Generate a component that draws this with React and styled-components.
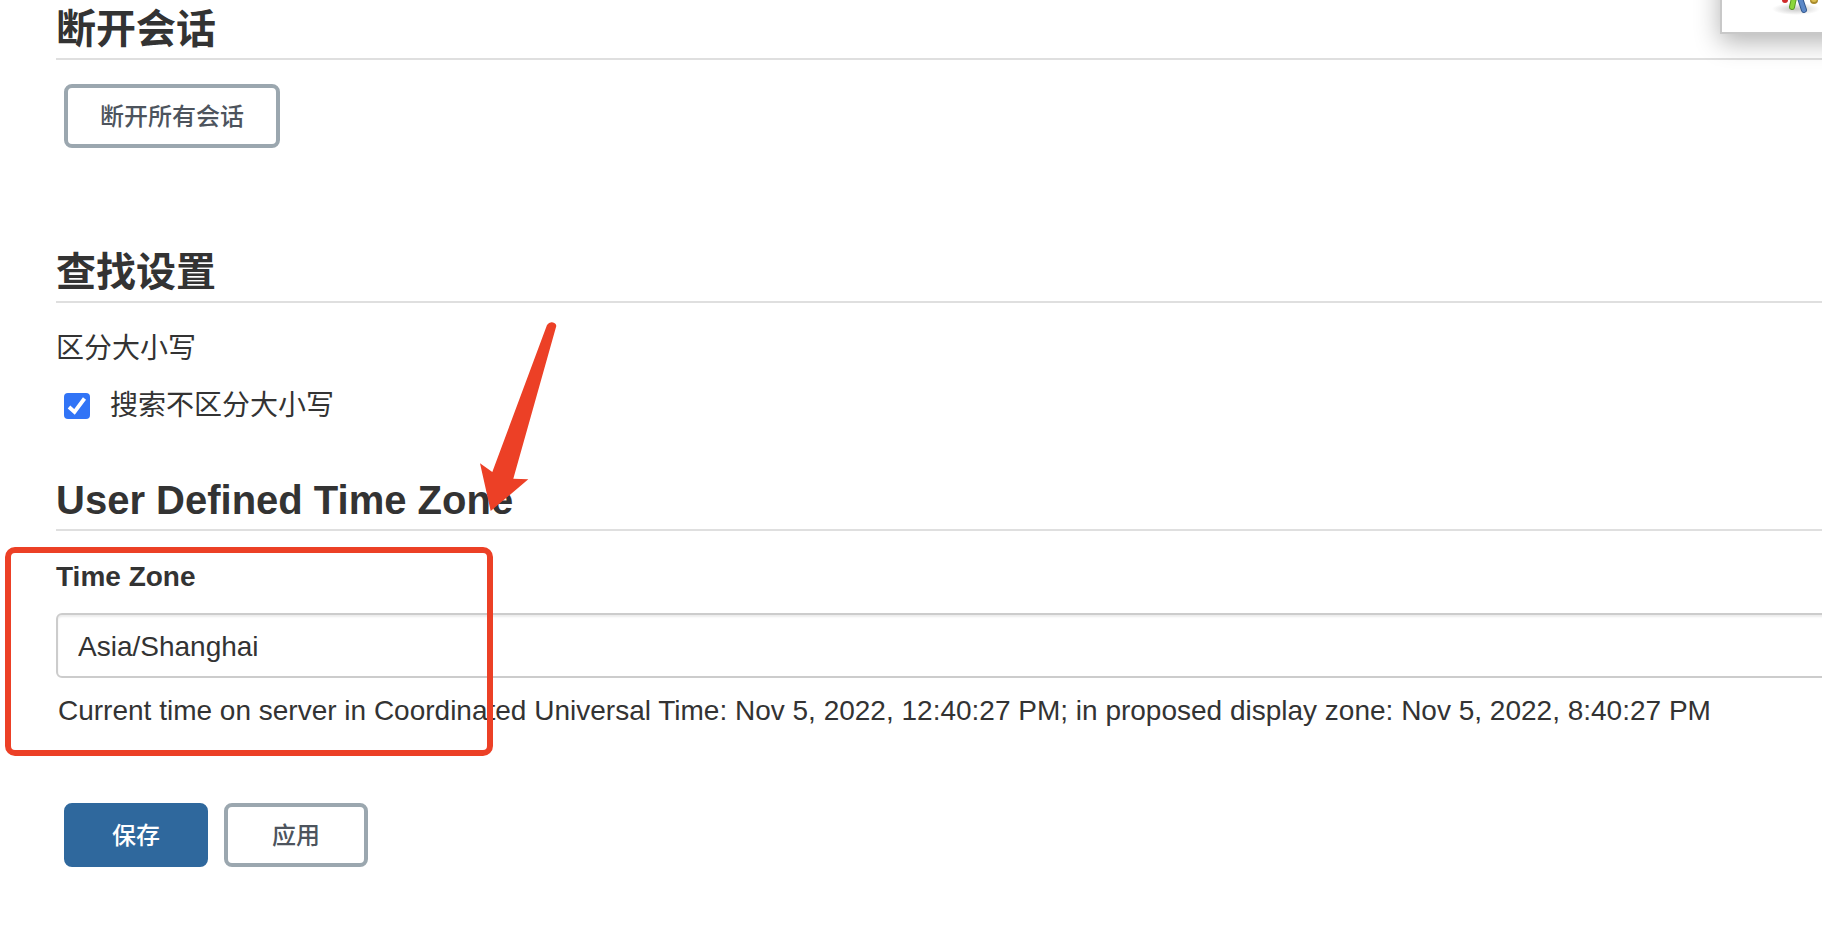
import React, { useState } from 'react';
import styled, { createGlobalStyle } from 'styled-components';

const GlobalStyle = createGlobalStyle`
  * {
    box-sizing: border-box;
  }
  body {
    margin: 0;
    background: #ffffff;
    color: #333333;
    font-family: "Liberation Sans", "Noto Sans CJK SC", sans-serif;
    font-size: 28px;
    line-height: 40px;
  }
`;

const PageStyled = styled.main`
  position: relative;
  padding: 6px 0 60px 56px;
  overflow: hidden;
`;
const SectionStyled = styled.section`
  margin-bottom: ${props => props.$gap}px;
`;
const TitleStyled = styled.h2`
  margin: 0 0 24px;
  padding-bottom: 6px;
  border-bottom: 2px solid #dfdfdf;
  font-size: 40px;
  line-height: 46px;
  font-weight: bold;
`;
const ButtonRowStyled = styled.div`
  display: flex;
  gap: 16px;
  padding-left: 8px;
`;
const ButtonStyled = styled.button`
  min-width: 144px;
  height: 64px;
  padding: 0 32px 4px;
  border: 4px solid ${props => props.$primary ? '#2f689d' : '#9ba7af'};
  border-radius: 8px;
  background: ${props => props.$primary ? '#2f689d' : '#ffffff'};
  color: ${props => props.$primary ? '#ffffff' : '#4d545d'};
  font-family: inherit;
  font-size: 24px;
  font-weight: 500;
  cursor: pointer;
`;
const CaptionStyled = styled.div`
  padding-top: 2px;
  margin-bottom: 17px;
`;
const CheckLabelStyled = styled.label`
  display: flex;
  align-items: center;
  gap: 20px;
  padding-left: 8px;
`;
const CheckboxStyled = styled.input`
  appearance: none;
  width: 26px;
  height: 26px;
  margin: 0;
  border: 2px solid #767676;
  border-radius: 4px;
  &:checked {
    border: none;
    background: #3174f6;
  }
`;
const CheckWrapStyled = styled.span`
  display: grid;
  > * {
    grid-area: 1 / 1;
  }
  svg {
    pointer-events: none;
  }
`;
const FieldLabelStyled = styled.label`
  display: block;
  padding-top: 2px;
  margin-bottom: 16px;
  font-weight: bold;
`;
const TextFieldStyled = styled.input`
  display: block;
  width: calc(100% + 16px);
  height: 65px;
  padding: 2px 20px 0;
  border: 2px solid #cccccc;
  border-radius: 6px;
  box-shadow: inset 0 2px 2px rgba(0, 0, 0, 0.08);
  background: #ffffff;
  color: #333333;
  font-family: inherit;
  font-size: 28px;
  outline: none;
`;
const HelpStyled = styled.div`
  padding: 13px 0 0 2px;
`;
const PopupStyled = styled.div`
  position: absolute;
  top: -66px;
  right: -60px;
  width: 162px;
  height: 100px;
  border: 2px solid #c8c8c8;
  background: #ffffff;
  box-shadow: 0 8px 24px rgba(0, 0, 0, 0.3);
  svg {
    position: absolute;
    left: 46px;
    bottom: 16px;
  }
`;
const FrameStyled = styled.div`
  position: absolute;
  left: 5px;
  top: 547px;
  width: 488px;
  height: 209px;
  border: 6px solid #ec4026;
  border-radius: 10px;
  pointer-events: none;
`;
const ArrowStyled = styled.svg`
  position: absolute;
  left: 478px;
  top: 320px;
  pointer-events: none;
`;

const Popup = () => <PopupStyled>
  <svg width="56" height="22" viewBox="0 0 56 22">
    <defs>
      <radialGradient id="ground">
        <stop offset="0" stopColor="#c8c8c8" />
        <stop offset="1" stopColor="#ffffff" />
      </radialGradient>
    </defs>
    <ellipse cx="28" cy="15" rx="24" ry="6" fill="url(#ground)" />
    <circle cx="17" cy="6" r="3" fill="#cf2a2a" />
    <path d="M26 4 L24 13" stroke="#5a9a24" strokeWidth="6" strokeLinecap="round" />
    <path d="M26 4 L24 13" stroke="#8bd63c" strokeWidth="4" strokeLinecap="round" />
    <path d="M32 4 L36 16" stroke="#33588e" strokeWidth="6" strokeLinecap="round" />
    <path d="M32 4 L36 16" stroke="#5b88c8" strokeWidth="4" strokeLinecap="round" />
    <circle cx="46" cy="6" r="4" fill="#a88a2c" />
    <circle cx="46" cy="5" r="3" fill="#dcbf50" />
  </svg>
</PopupStyled>;

const App = () => {
  const [insensitive, setInsensitive] = useState(true);
  const [timeZone, setTimeZone] = useState('Asia/Shanghai');

  return <PageStyled>
    <GlobalStyle />
    <Popup />
    <SectionStyled $gap={101}>
      <TitleStyled>断开会话</TitleStyled>
      <ButtonRowStyled>
        <ButtonStyled type="button">断开所有会话</ButtonStyled>
      </ButtonRowStyled>
    </SectionStyled>

    <SectionStyled $gap={51}>
      <TitleStyled>查找设置</TitleStyled>
      <CaptionStyled>区分大小写</CaptionStyled>
      <CheckLabelStyled>
        <CheckWrapStyled>
          <CheckboxStyled type="checkbox" checked={insensitive} onChange={e => setInsensitive(e.target.checked)} />
          <svg width="26" height="26" viewBox="0 0 26 26">
            <path d="M5 14 L10.5 19 L20.5 5.5" fill="none" stroke="#ffffff" strokeWidth="3.8" />
          </svg>
        </CheckWrapStyled>
        搜索不区分大小写
      </CheckLabelStyled>
    </SectionStyled>

    <SectionStyled $gap={72}>
      <TitleStyled>User Defined Time Zone</TitleStyled>
      <FieldLabelStyled htmlFor="timezone">Time Zone</FieldLabelStyled>
      <TextFieldStyled id="timezone" type="text" value={timeZone} onChange={e => setTimeZone(e.target.value)} />
      <HelpStyled>
        Current time on server in Coordinated Universal Time: Nov 5, 2022, 12:40:27 PM; in proposed display zone: Nov 5, 2022, 8:40:27 PM
      </HelpStyled>
    </SectionStyled>

    <ButtonRowStyled>
      <ButtonStyled type="submit" $primary>保存</ButtonStyled>
      <ButtonStyled type="button">应用</ButtonStyled>
    </ButtonRowStyled>

    <FrameStyled />
    <ArrowStyled width="82" height="194" viewBox="478 320 82 194">
      <path d="M490.7 511 L480 463.3 L492.3 472 L547 325 Q549 322 552 322.3 Q556 323 556.3 326 L513.3 478.7 L528.3 479.3 Z" fill="#ec4026" />
    </ArrowStyled>
  </PageStyled>;
}

export default App;
